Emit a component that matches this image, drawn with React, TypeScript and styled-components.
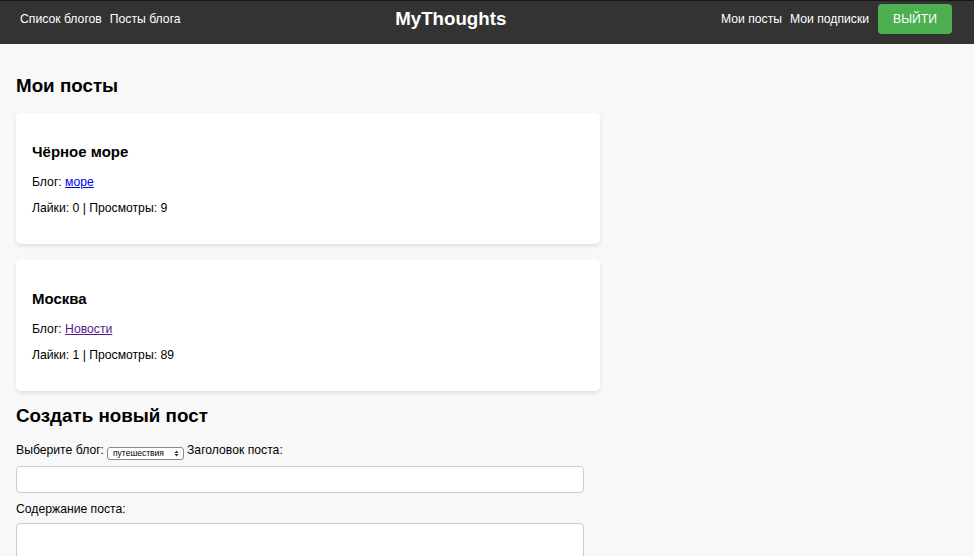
import React from 'react';
import styled, { createGlobalStyle } from 'styled-components';

const GlobalStyle = createGlobalStyle`
  html, body {
    margin: 0;
    padding: 0;
    background: #f8f8f8;
    font-family: "Liberation Sans", Arial, Helvetica, sans-serif;
    color: #000;
  }
`;

const Header = styled.header`
  height: 44px;
  box-sizing: border-box;
  background: #333;
  border-top: 1px solid #161616;
  padding: 3px 22px 10px 20px;
  display: flex;
  align-items: center;
  justify-content: space-between;
  color: #fff;
`;

const NavGroup = styled.nav`
  display: flex;
  align-items: center;
  gap: 8px;
`;

const NavLink = styled.a`
  color: #fff;
  text-decoration: none;
  font-size: 12.2px;
`;

const Logo = styled.div`
  font-size: 18.72px;
  font-weight: bold;
  color: #fff;
`;

const LogoutButton = styled.button`
  margin-left: 1px;
  background: #4caf50;
  color: #fff;
  border: none;
  border-radius: 4px;
  font-family: inherit;
  font-size: 12.2px;
  line-height: 16px;
  padding: 7px 15px;
`;

const Main = styled.main`
  padding: 16px 16px;
  width: 584px;
`;

const SectionTitle = styled.h2<{ $first?: boolean }>`
  font-size: 18.8px;
  font-weight: bold;
  margin: ${p => (p.$first ? '15px 0 16px' : '14px 0 16px')};
`;

const PostList = styled.div`
  display: flex;
  flex-direction: column;
  gap: 16px;
`;

const PostCard = styled.article`
  background: #fff;
  border-radius: 5px;
  box-shadow: 0 2px 4px rgba(0, 0, 0, 0.1);
  padding: 16px 16px 17px;
`;

const PostTitle = styled.h3`
  font-size: 15px;
  font-weight: bold;
  margin: 14px 0 15px;
`;

const PostMeta = styled.p`
  font-size: 12.2px;
  margin: 12px 0;
`;

const BlogLink = styled.a<{ $visited?: boolean }>`
  color: ${p => (p.$visited ? '#551a8b' : '#0000ee')};
  text-decoration: underline;
`;

const Form = styled.form`
  font-size: 12.2px;
`;

const Label = styled.label`
  font-size: 12.2px;
`;

const SelectWrap = styled.span`
  position: relative;
  display: inline-block;
  margin: 0 3px;
  vertical-align: -2px;
`;

const Select = styled.select`
  appearance: none;
  -webkit-appearance: none;
  width: 77px;
  height: 13px;
  box-sizing: border-box;
  border: 1px solid #8a8a8a;
  border-radius: 3px;
  background: #fff;
  font-family: inherit;
  font-size: 8.5px;
  line-height: 11px;
  padding: 0 14px 0 5px;
  color: #000;
  display: block;
`;

const SelectArrows = styled.svg`
  position: absolute;
  right: 5px;
  top: 3px;
  pointer-events: none;
`;

const TextInput = styled.input`
  display: block;
  width: 568px;
  height: 27px;
  box-sizing: border-box;
  border: 1px solid #ccc;
  border-radius: 4px;
  background: #fff;
  margin: 6px 0 9px;
`;

const TextArea = styled.textarea`
  display: block;
  width: 568px;
  height: 60px;
  box-sizing: border-box;
  border: 1px solid #ccc;
  border-radius: 4px;
  background: #fff;
  margin: 7px 0 0;
  resize: vertical;
`;

const posts = [
  { title: 'Чёрное море', blog: 'море', likes: 0, views: 9, visited: false },
  { title: 'Москва', blog: 'Новости', likes: 1, views: 89, visited: true },
];

const App = () => {
  return (
    <>
      <GlobalStyle />
      <Header>
        <NavGroup>
          <NavLink href="#">Список блогов</NavLink>
          <NavLink href="#">Посты блога</NavLink>
        </NavGroup>
        <Logo>MyThoughts</Logo>
        <NavGroup>
          <NavLink href="#">Мои посты</NavLink>
          <NavLink href="#">Мои подписки</NavLink>
          <LogoutButton>ВЫЙТИ</LogoutButton>
        </NavGroup>
      </Header>

      <Main>
        <SectionTitle $first>Мои посты</SectionTitle>
        <PostList>
          {posts.map(post => (
            <PostCard key={post.title}>
              <PostTitle>{post.title}</PostTitle>
              <PostMeta>
                Блог: <BlogLink href="#" $visited={post.visited}>{post.blog}</BlogLink>
              </PostMeta>
              <PostMeta>
                Лайки: {post.likes} | Просмотры: {post.views}
              </PostMeta>
            </PostCard>
          ))}
        </PostList>

        <SectionTitle>Создать новый пост</SectionTitle>
        <Form onSubmit={e => e.preventDefault()}>
          <Label>Выберите блог:</Label>
          <SelectWrap>
            <Select defaultValue="travel">
              <option value="travel">путешествия</option>
              <option value="sea">море</option>
              <option value="news">Новости</option>
            </Select>
            <SelectArrows width="5" height="7" viewBox="0 0 5 7">
              <path d="M0.5 3 L2.5 0.5 L4.5 3 Z M0.5 4 L2.5 6.5 L4.5 4 Z" fill="#333" />
            </SelectArrows>
          </SelectWrap>
          <Label>Заголовок поста:</Label>
          <TextInput type="text" />
          <Label>Содержание поста:</Label>
          <TextArea />
        </Form>
      </Main>
    </>
  );
};

export default App;
